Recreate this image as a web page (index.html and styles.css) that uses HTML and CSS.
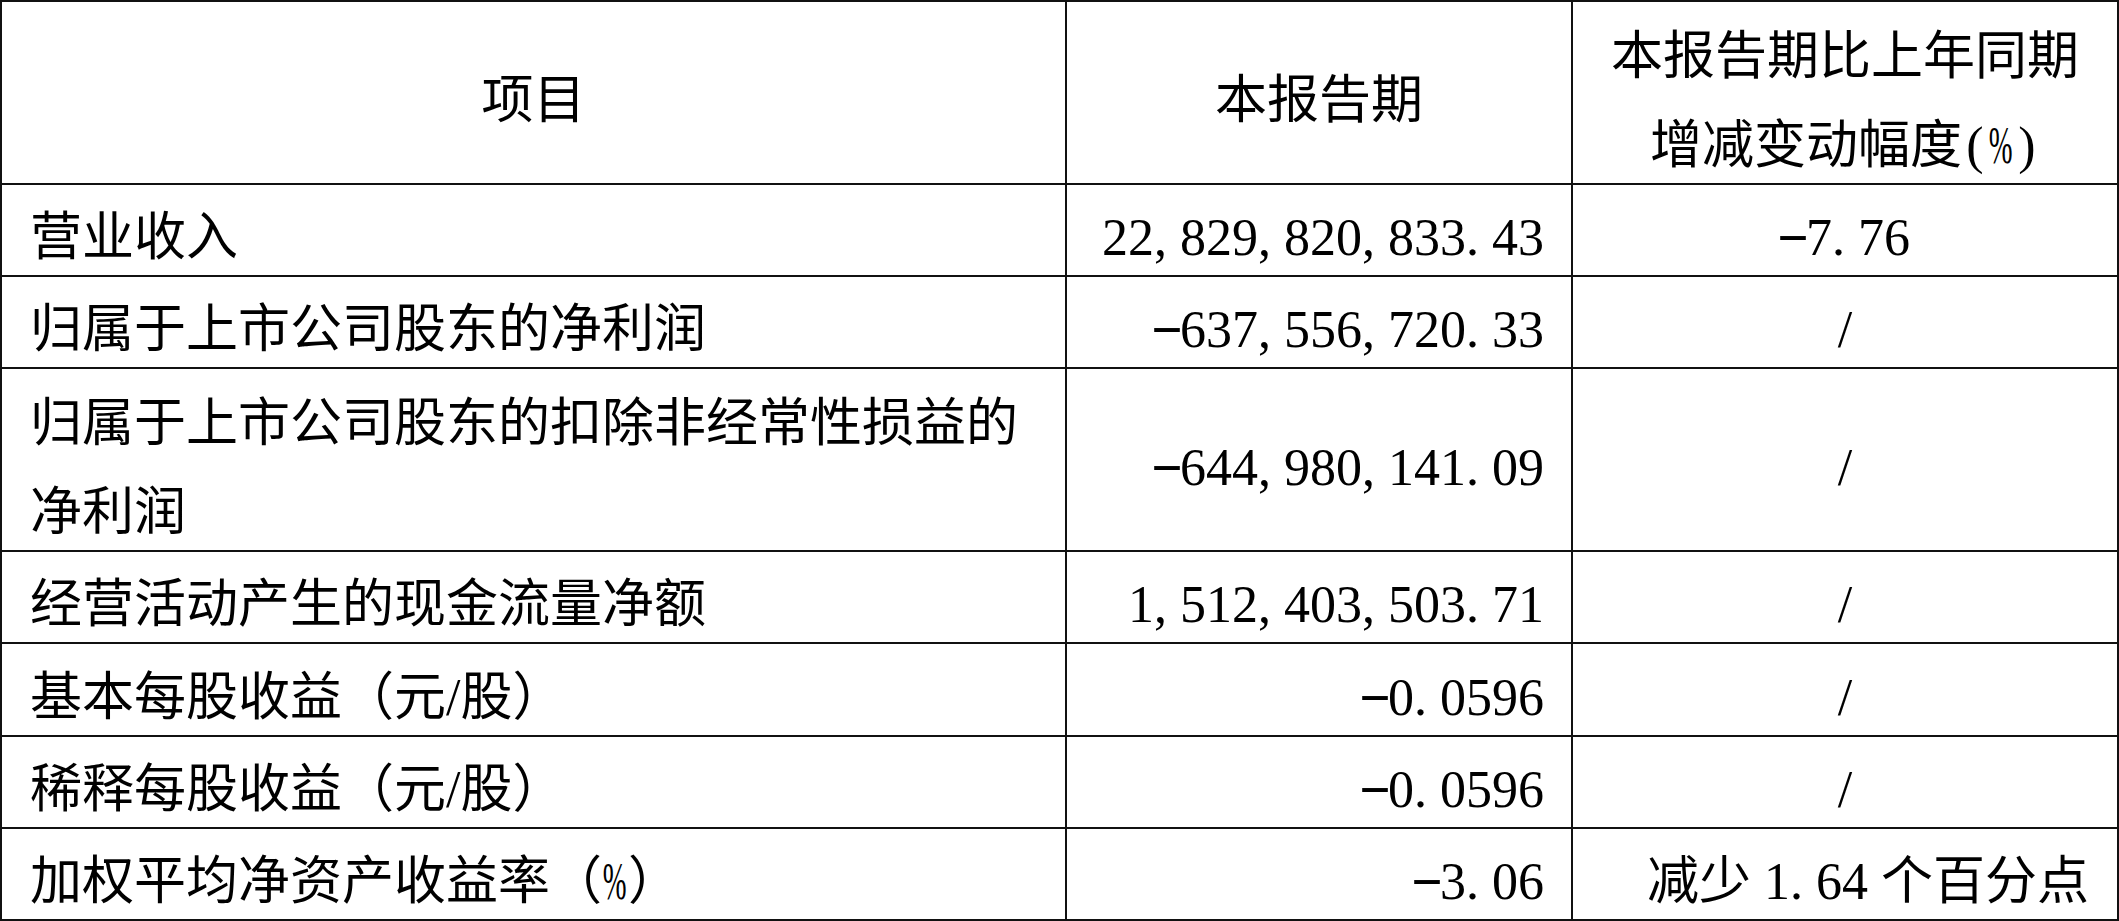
FILE: index.html
```html
<!DOCTYPE html>
<html lang="zh-CN">
<head>
<meta charset="utf-8">
<title>主要财务数据</title>
<link rel="stylesheet" href="styles.css">
</head>
<body>
<div class="table">
  <div class="cell ctr"><div class="v">项目</div></div>
  <div class="cell ctr"><div class="v">本报告期</div></div>
  <div class="cell ctr multi"><div class="v">本报告期比上年同期<br>增减变动幅度<span class="hw">(</span><span class="hw"><span class="pct">%</span></span><span class="hw">)</span></div></div>

  <div class="cell lbl"><div class="v">营业收入</div></div>
  <div class="cell num"><div class="v">22<span class="pc">,</span>829<span class="pc">,</span>820<span class="pc">,</span>833<span class="pc">.</span>43</div></div>
  <div class="cell ctr"><div class="v"><span class="mn">-</span>7<span class="pc">.</span>76</div></div>

  <div class="cell lbl"><div class="v">归属于上市公司股东的净利润</div></div>
  <div class="cell num"><div class="v"><span class="mn">-</span>637<span class="pc">,</span>556<span class="pc">,</span>720<span class="pc">.</span>33</div></div>
  <div class="cell ctr"><div class="v">/</div></div>

  <div class="cell lbl multi"><div class="v">归属于上市公司股东的扣除非经常性损益的<br>净利润</div></div>
  <div class="cell num"><div class="v"><span class="mn">-</span>644<span class="pc">,</span>980<span class="pc">,</span>141<span class="pc">.</span>09</div></div>
  <div class="cell ctr"><div class="v">/</div></div>

  <div class="cell lbl"><div class="v">经营活动产生的现金流量净额</div></div>
  <div class="cell num"><div class="v">1<span class="pc">,</span>512<span class="pc">,</span>403<span class="pc">,</span>503<span class="pc">.</span>71</div></div>
  <div class="cell ctr"><div class="v">/</div></div>

  <div class="cell lbl"><div class="v">基本每股收益（元/股）</div></div>
  <div class="cell num"><div class="v"><span class="mn">-</span>0<span class="pc">.</span>0596</div></div>
  <div class="cell ctr"><div class="v">/</div></div>

  <div class="cell lbl"><div class="v">稀释每股收益（元/股）</div></div>
  <div class="cell num"><div class="v"><span class="mn">-</span>0<span class="pc">.</span>0596</div></div>
  <div class="cell ctr"><div class="v">/</div></div>

  <div class="cell lbl"><div class="v">加权平均净资产收益率（<span class="hw"><span class="pct">%</span></span>）</div></div>
  <div class="cell num"><div class="v"><span class="mn">-</span>3<span class="pc">.</span>06</div></div>
  <div class="cell start"><div class="v">减少 1<span class="pc">.</span>64 个百分点</div></div>
</div>
</body>
</html>
```

FILE: styles.css
```css
html, body {
  margin: 0;
  padding: 0;
  background: #ffffff;
}

.table {
  display: grid;
  grid-template-columns: 1063px 504px 544px;
  grid-template-rows: 181px 90px 90px 181px 90px 91px 90px 90px;
  gap: 2px;
  padding: 2px;
  width: max-content;
  background: #111111;
  font-family: "Liberation Serif", "Noto Sans CJK SC", serif;
  font-size: 52px;
  color: #000000;
}

.cell {
  background: #ffffff;
  display: flex;
  align-items: center;
  box-sizing: border-box;
  padding-top: 16px;
  line-height: 74px;
  white-space: nowrap;
}

.multi {
  line-height: 89px;
}

.lbl {
  justify-content: flex-start;
  padding-left: 28px;
}

.num {
  justify-content: flex-end;
  padding-right: 27px;
}

.ctr {
  justify-content: center;
  text-align: center;
}

.start {
  justify-content: flex-start;
  padding-left: 74px;
}

.pc {
  display: inline-block;
  width: 0.5em;
  text-align: left;
}

.mn {
  display: inline-block;
  width: 0.5em;
  text-align: center;
  transform: translateY(-4px) scaleX(1.9);
}

.hw {
  display: inline-flex;
  justify-content: center;
  width: 0.5em;
}

.pct {
  display: inline-block;
  transform: scaleX(0.55);
}
```
